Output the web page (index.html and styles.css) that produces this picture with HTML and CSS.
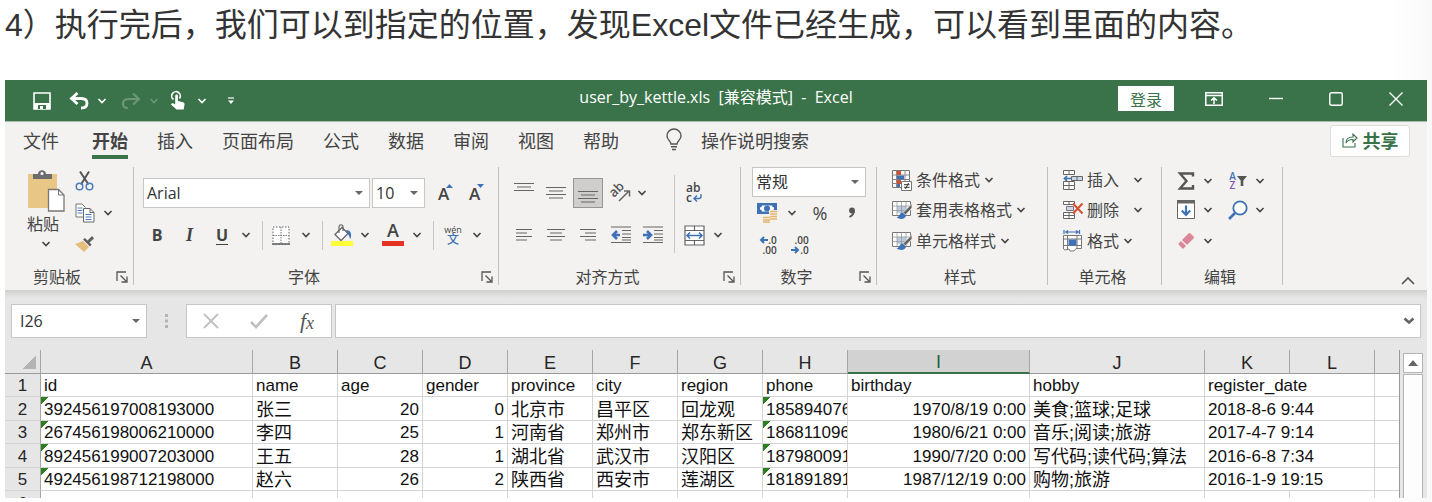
FILE: index.html
```html
<!DOCTYPE html>
<html lang="zh-CN">
<head>
<meta charset="utf-8">
<title>user_by_kettle.xls - Excel</title>
<link rel="stylesheet" href="styles.css">
</head>
<body>
<svg class="defs" aria-hidden="true">
  <symbol id="chev" viewBox="0 0 10 8"><path d="M1.500 2 5 5.500 8.500 2" fill="none" stroke="currentColor" stroke-width="1.600"/></symbol>
  <symbol id="launch" viewBox="0 0 12 12"><path d="M1 10V1h9M4.500 4.500 10 10M11 5.500V11H5.500" fill="none" stroke="#555" stroke-width="1.300"/></symbol>
  <symbol id="tablebrush" viewBox="0 0 20 20"><path d="M.5 1.500h18v14H.5z" fill="#fff" stroke="#777"/><path d="M5 6h9v7H5z" fill="#b9cbe4"/><path d="M.5 6h18M.5 10.500h18M5 1.500v14M9.500 1.500v14M14 1.500v14" stroke="#999" stroke-width=".8"/><path d="M20 3.500 11 12.500l2.500 2.500 6.500-7z" fill="#666" stroke="#f3f2f1" stroke-width=".8"/><path d="M10.500 12.500c-3 0-2.500 4-6 5 4 2.500 9 1.500 9.500-2z" fill="#3f72b5"/></symbol>
</svg>

<p class="lead">4）执行完后，我们可以到指定的位置，发现Excel文件已经生成，可以看到里面的内容。</p>

<main class="window">
  <header class="titlebar">
    <div class="quick">
      <button aria-label="保存"><svg width="18" height="18" viewBox="0 0 18 18"><path d="M1 1h16v16H1z" fill="none" stroke="#fff" stroke-width="1.600"/><path d="M1 11h16v6H1z" fill="#fff"/><path d="M5 13h8v4H5z" fill="#3a734a"/><path d="M7 14h3v3H7z" fill="#fff"/></svg></button>
      <button class="undo" aria-label="撤消"><svg width="20" height="18" viewBox="0 0 20 18"><path d="M8.500 1 2.500 6.500l6 5.500M3 6.500h9c4 0 6 2 6 4.700s-2 4.800-6 4.800" fill="none" stroke="#fff" stroke-width="2.800"/></svg></button>
      <button class="arrow" aria-label="撤消列表"><svg class="chev"><use href="#chev"/></svg></button>
      <button class="dim redo" aria-label="恢复"><svg width="20" height="18" viewBox="0 0 20 18"><path d="m12 1.500 6 5.500-6 5.500M17 7H8c-4 0-6 2-6 4.700S4 16 7 16" fill="none" stroke="currentColor" stroke-width="2.200"/></svg></button>
      <button class="dim arrow" aria-label="恢复列表"><svg class="chev"><use href="#chev"/></svg></button>
      <button class="touch" aria-label="触摸模式"><svg width="16" height="20" viewBox="0 0 16 20"><path d="M3.500 8.500a4.300 4.300 0 1 1 6-1" fill="none" stroke="#fff" stroke-width="1.700"/><path d="M5.200 5c0-2 2.800-2 2.800 0v5l5 1.200c1.300.3 1.700 1.300 1.500 2.300l-.8 5H6.500L1 13.500c.5-1.500 2-1.600 4.200 0z" fill="#fff"/></svg></button>
      <button class="touch" aria-label="模式列表"><svg class="chev"><use href="#chev"/></svg></button>
      <button class="more" aria-label="自定义"><svg width="8" height="8" viewBox="0 0 8 8"><path d="M1 1h6" stroke="#fff" stroke-width="1.200"/><path d="M1 3.500h6L4 7z" fill="#fff"/></svg></button>
    </div>
    <h1 class="doc">user_by_kettle.xls&nbsp; [兼容模式]&nbsp; -&nbsp; Excel</h1>
    <div class="sys">
      <button class="login">登录</button>
      <button aria-label="功能区显示选项"><svg width="18" height="14" viewBox="0 0 18 14"><path d="M.8.800h16.400v12.400H.8zM.8 3.500h16.400M9 12V6M6 8.500 9 5.700l3 2.800" fill="none" stroke="#fff" stroke-width="1.500"/></svg></button>
      <button aria-label="最小化"><svg width="14" height="14" viewBox="0 0 14 14"><path d="M0 6.500h14" stroke="#fff" stroke-width="1.400"/></svg></button>
      <button aria-label="最大化"><svg width="14" height="14" viewBox="0 0 14 14"><rect x=".8" y=".8" width="12.400" height="12.400" rx="1.500" fill="none" stroke="#fff" stroke-width="1.400"/></svg></button>
      <button aria-label="关闭"><svg width="14" height="14" viewBox="0 0 14 14"><path d="m.5.500 13 13M13.500.500l-13 13" stroke="#fff" stroke-width="1.400"/></svg></button>
    </div>
  </header>

  <nav class="tabs">
    <button>文件</button>
    <button class="active">开始</button>
    <button>插入</button>
    <button>页面布局</button>
    <button>公式</button>
    <button>数据</button>
    <button>审阅</button>
    <button>视图</button>
    <button>帮助</button>
    <button class="tell"><svg width="16" height="22" viewBox="0 0 16 22"><path d="M5 15c0-3-4-4-4-8a7 7 0 0 1 14 0c0 4-4 5-4 8zM5 17.800h6M6 20.500h4" fill="none" stroke="#555" stroke-width="1.400"/></svg>操作说明搜索</button>
    <button class="share"><svg width="16" height="16" viewBox="0 0 16 16"><path d="M1 6v9h12v-4M4 11c0-4 3-6 7-6V2l4 4-4 4V7.500C8 7.500 5.500 8 4 11z" fill="none" stroke="#3a734a" stroke-width="1.100"/></svg>共享</button>
  </nav>

  <section class="ribbon">
    <div class="group clip">
      <div class="clip-tools">
        <button class="paste"><svg width="38" height="42" viewBox="0 0 38 42"><path d="M1 4h29v34H1z" fill="#e8c786"/><path d="M6 9V4h5c0-5 8-5 8 0h6v5z" fill="#6c6c6c"/><circle cx="15" cy="3.500" r="1.500" fill="#fff"/><path d="M21.500 19.500h10l5.500 5.500v16H21.500z" fill="#fff" stroke="#777" stroke-width="1.300"/><path d="M31.500 19.500V25H37" fill="none" stroke="#777"/></svg><span>粘贴</span><svg class="chev"><use href="#chev"/></svg></button>
        <div class="clip-side">
          <button aria-label="剪切"><svg width="20" height="20" viewBox="0 0 20 20"><path d="m5 .5 8.500 13M14 .5l-8 13" stroke="#555" stroke-width="2"/><circle cx="4.500" cy="15.500" r="3.300" fill="none" stroke="#4a7dbd" stroke-width="1.500"/><circle cx="14.500" cy="15.500" r="3.300" fill="none" stroke="#4a7dbd" stroke-width="1.500"/></svg></button>
          <button class="copy" aria-label="复制"><svg width="20" height="20" viewBox="0 0 20 20"><path d="M1 1h6l3.500 3.500V14H1z" fill="#fff" stroke="#777"/><path d="M2.500 5h5M2.500 7.500h5M2.500 10h5" stroke="#4a7dbd"/><path d="M8.500 5.500H15l4 4V19H8.500z" fill="#fff" stroke="#666"/><path d="M15 5.500v4h4" fill="none" stroke="#666"/><path d="M10.500 11.500h6M10.500 14h6M10.500 16.500h6" stroke="#4a7dbd"/></svg></button>
          <svg class="chev"><use href="#chev"/></svg>
          <button aria-label="格式刷"><svg width="20" height="16" viewBox="0 0 20 16"><path d="M0 8 8 5l6 6-5 5z" fill="#e6bd7c"/><path d="m8 3.500 2-1.500 2.500 2.500L17 0l2 2.500-4.500 4 2 2L15 10.500z" fill="#5f5f5f"/></svg></button>
        </div>
      </div>
      <footer><span>剪贴板</span><svg class="launch"><use href="#launch"/></svg></footer>
    </div>

    <div class="group font">
      <div class="two">
        <div class="font-pick">
          <span class="combo family"><select aria-label="字体"><option>Arial</option></select></span>
          <span class="combo size"><select aria-label="字号"><option>10</option></select></span>
          <button class="grow" aria-label="增大字号">A<svg width="7" height="4" viewBox="0 0 7 4"><path d="M0 4h7L3.500 0z" fill="#3f72b5"/></svg></button>
          <button class="grow" aria-label="减小字号">A<svg width="7" height="4" viewBox="0 0 7 4"><path d="M0 0h7L3.500 4z" fill="#3f72b5"/></svg></button>
        </div>
        <div class="font-style">
          <button class="bold">B</button>
          <button class="italic">I</button>
          <button class="under">U</button>
          <svg class="chev"><use href="#chev"/></svg>
          <i class="bar"></i>
          <button aria-label="边框"><svg width="18" height="19" viewBox="0 0 18 19"><path d="M1 1h16v17H1z" fill="#fff" stroke="#666" stroke-dasharray="1.500 1.500"/><path d="M9 1v17M1 9.500h16" stroke="#777" stroke-dasharray="1.500 1"/><path d="M0 18h18" stroke="#555" stroke-width="1.400"/></svg></button>
          <svg class="chev"><use href="#chev"/></svg>
          <i class="bar"></i>
          <button aria-label="填充颜色"><svg width="22" height="22" viewBox="0 0 22 22"><path d="m4 10.500 7-7 6 6-7 7z" fill="#fff" stroke="#666" stroke-width="1.300"/><path d="M8 9V3c0-3 4-3 4 0v4" fill="none" stroke="#666" stroke-width="1.200"/><path d="M15 6c5 0 6 4 4.500 9-1-1-1-3-2.500-5z" fill="#3f72b5"/><path d="M0 17h22v5H0z" fill="#ffff38"/></svg></button>
          <svg class="chev"><use href="#chev"/></svg>
          <button class="color">A</button>
          <svg class="chev"><use href="#chev"/></svg>
          <i class="bar"></i>
          <button class="wen"><span>wén</span><b>文</b></button>
          <svg class="chev"><use href="#chev"/></svg>
        </div>
      </div>
      <footer><span>字体</span><svg class="launch"><use href="#launch"/></svg></footer>
    </div>

    <div class="group align">
      <div class="align-tools">
        <button class="up" aria-label="顶端对齐"><svg width="20" height="12" viewBox="0 0 20 12"><path d="M0 1.500h20M3 5h14M0 8.500h20" stroke="#666" stroke-width="1.200"/></svg></button>
        <button class="mid" aria-label="垂直居中"><svg width="20" height="14" viewBox="0 0 20 14"><path d="M0 1.500h20M3 5h14M0 8.500h20M3 12h14" stroke="#666" stroke-width="1.200"/></svg></button>
        <button class="on" aria-label="底端对齐"><svg width="20" height="14" viewBox="0 0 20 14"><path d="M0 1.500h20M3 5h14M0 8.500h20M3 12h14" stroke="#666" stroke-width="1.200"/></svg></button>
        <button aria-label="方向"><svg width="22" height="20" viewBox="0 0 22 20"><text x="4" y="15" transform="rotate(-45 4 15)" font-family="Open Sans" font-weight="600" font-size="13" fill="#555">ab</text><path d="m9 18 10-10M14 8h5.500v5.500" fill="none" stroke="#666" stroke-width="1.500"/></svg></button>
        <svg class="chev near"><use href="#chev"/></svg>
        <i class="bar tall"></i>
        <button class="wrap"><span>ab</span><span>c<svg width="9" height="8" viewBox="0 0 9 8"><path d="M8 0v2.500C8 4 7 4.500 6 4.500H1.500m2.500-3-3 3 3 3" fill="none" stroke="#3f72b5" stroke-width="1.400"/></svg></span></button>
        <span></span>
        <button aria-label="左对齐"><svg width="18" height="14" viewBox="0 0 18 14"><path d="M1 1.500h16M1 5h11M1 8.500h16M1 12h11" stroke="#666" stroke-width="1.200"/></svg></button>
        <button aria-label="居中"><svg width="18" height="14" viewBox="0 0 18 14"><path d="M0 1.500h18M3 5h12M0 8.500h18M3 12h12" stroke="#666" stroke-width="1.200"/></svg></button>
        <button aria-label="右对齐"><svg width="18" height="14" viewBox="0 0 18 14"><path d="M1 1.500h16M6 5h11M1 8.500h16M6 12h11" stroke="#666" stroke-width="1.200"/></svg></button>
        <button aria-label="减少缩进"><svg width="20" height="18" viewBox="0 0 20 18"><path d="M0 1h20M11 4.500h9M11 8h9M11 11.500h9M0 16.500h20M11 14h9" stroke="#666" stroke-width="1.200"/><path d="M9 9H2m4-4L2 9l4 4" fill="none" stroke="#3f72b5" stroke-width="2.600"/></svg></button>
        <button aria-label="增加缩进"><svg width="20" height="18" viewBox="0 0 20 18"><path d="M0 1h20M11 4.500h9M11 8h9M11 11.500h9M0 16.500h20M11 14h9" stroke="#666" stroke-width="1.200"/><path d="M0 9h7M4 5l4 4-4 4" fill="none" stroke="#3f72b5" stroke-width="2.600"/></svg></button>
        <button aria-label="合并后居中"><svg width="21" height="21" viewBox="0 0 21 21"><path d="M1 1h19v19H1z" fill="#fff" stroke="#666" stroke-width="1.200"/><path d="M1 5.500h19M1 15.500h19M10.500 1v4.500M10.500 15.500V20" stroke="#666" stroke-width="1.200"/><path d="M3 10.500h15M6 7.500l-3 3 3 3M15 7.500l3 3-3 3" fill="none" stroke="#3f72b5" stroke-width="1.600"/></svg></button>
        <svg class="chev"><use href="#chev"/></svg>
      </div>
      <footer><span>对齐方式</span><svg class="launch"><use href="#launch"/></svg></footer>
    </div>

    <div class="group number">
      <div class="number-tools">
        <span class="combo format"><select aria-label="数字格式"><option>常规</option></select></span>
        <div class="number-row">
          <button aria-label="会计数字格式"><svg width="22" height="20" viewBox="0 0 22 20"><path d="M0 0h20v11H0z" fill="#3f72b5"/><path d="M5 2.500h10q0 2 2 2v2q-2 0-2 2H5q0-2-2-2v-2q2 0 2-2z" fill="#fff"/><circle cx="10" cy="5.500" r="3" fill="#3f72b5"/><path d="M12 7h9v12H6v-7h6z" fill="#f3f2f1"/><path d="M13 8.500h7M13 11h7M13 13.500h7M13 16h7M6 14.500h7M6 17h7M6 19h7" stroke="#e3b76b" stroke-width="1.600"/></svg></button>
          <svg class="chev"><use href="#chev"/></svg>
          <button class="pct">%</button>
          <button aria-label="千位分隔样式"><svg width="8" height="12" viewBox="0 0 8 12"><circle cx="4" cy="3.500" r="2.900" fill="#555"/><path d="M6 3.500C6 7 4.500 8.500 1.500 10" fill="none" stroke="#555" stroke-width="1.800"/></svg></button>
        </div>
        <div class="decimals">
          <button><span><svg width="9" height="8" viewBox="0 0 9 8"><path d="M9 4H2m3-3L2 4l3 3" fill="none" stroke="#3f72b5" stroke-width="2"/></svg>.0</span><span>.00</span></button>
          <button><span>.00</span><span><svg width="9" height="8" viewBox="0 0 9 8"><path d="M0 4h7M4 1l3 3-3 3" fill="none" stroke="#3f72b5" stroke-width="2"/></svg>.0</span></button>
        </div>
      </div>
      <footer><span>数字</span><svg class="launch"><use href="#launch"/></svg></footer>
    </div>

    <div class="group styles">
      <div class="list">
        <button><svg width="20" height="21" viewBox="0 0 20 21"><path d="M.5.500h17v17H.5z" fill="#fff" stroke="#777"/><path d="M4.500.500v17M13 .5v17M.5 5h17M.5 9.500h17M.5 13.500h17" stroke="#888"/><path d="M5 1h4v4H5zM5 10h4v4H5z" fill="#d4502e"/><path d="M5 5.500h7v4H5zM5 14h3v3H5z" fill="#3f72b5"/><path d="M9.500 11.500h10v9h-10z" fill="#fff" stroke="#777"/><path d="M12 14.700h5.500M12 17.300h5.500M16.500 13l-3 6" stroke="#333"/></svg>条件格式<svg class="chev"><use href="#chev"/></svg></button>
        <button><svg width="20" height="20"><use href="#tablebrush"/></svg>套用表格格式<svg class="chev"><use href="#chev"/></svg></button>
        <button><svg width="20" height="20"><use href="#tablebrush"/></svg>单元格样式<svg class="chev"><use href="#chev"/></svg></button>
      </div>
      <footer><span>样式</span></footer>
    </div>

    <div class="group cells">
      <div class="list">
        <button class="spread"><svg width="20" height="20" viewBox="0 0 20 20"><path d="M.5.500h11v4H.5zM6 .5v4M.5 11.500h11v8H.5zM6 11.500v8M.5 15.500h11" fill="#fff" stroke="#666"/><path d="M8.500 6.500h11v4h-11zM14 6.500v4" fill="#c9d6ea" stroke="#666"/><path d="M8 8.500H1.500M4 6 1.500 8.500 4 11" fill="none" stroke="#3f72b5" stroke-width="1.700"/></svg>插入<svg class="chev"><use href="#chev"/></svg></button>
        <button class="spread"><svg width="20" height="20" viewBox="0 0 20 20"><path d="M.5 1.500h11v3H.5zM6 1.500v3M.5 12.500h11v6H.5zM6 12.500v6M.5 15.500h11" fill="#fff" stroke="#666"/><path d="M3.500 6.500h7v4h-7z" fill="#c9d6ea" stroke="#777"/><path d="m10 3.500 9.500 10M19.500 3.500l-9.500 10" stroke="#d4502e" stroke-width="2"/></svg>删除<svg class="chev"><use href="#chev"/></svg></button>
        <button><svg width="20" height="22" viewBox="0 0 20 22"><path d="M2 2h14M1 0v4M16.500 0v4M5 .5 3 2l2 1.500M13 .5 15 2l-2 1.500" fill="none" stroke="#3f72b5" stroke-width="1.200"/><path d="M.5 5.500h18v13H13l-2 2.500H7l-1-2-4 1-1.500-1z" fill="#fff" stroke="#777"/><path d="M4.500 5.500v14M14 5.500v13M.5 9h18M.5 15.500h18" stroke="#777"/><path d="M5.500 9.500h8v6h-8z" fill="#3f72b5"/></svg>格式<svg class="chev"><use href="#chev"/></svg></button>
      </div>
      <footer><span>单元格</span></footer>
    </div>

    <div class="group edit">
      <div class="edit-tools">
        <button aria-label="自动求和"><svg width="18" height="18" viewBox="0 0 18 18"><path d="M16 4.500V1.500H3L9.500 9 3 16.500h13V13" fill="none" stroke="#555" stroke-width="2.400"/></svg></button>
        <svg class="chev"><use href="#chev"/></svg>
        <button class="sort"><span><b>A</b><b>Z</b></span><svg width="10" height="10" viewBox="0 0 10 10"><path d="M0 0h10L6.300 4.500V10H3.700V4.500z" fill="#555"/></svg></button>
        <svg class="chev"><use href="#chev"/></svg>
        <button aria-label="填充"><svg width="18" height="19" viewBox="0 0 18 19"><path d="M.5.500h17v18H.5z" fill="#fff" stroke="#666"/><path d="M0 0h18v3.500H0z" fill="#666"/><path d="M9 5.500v9M4.800 10.500 9 15l4.200-4.500" fill="none" stroke="#3f72b5" stroke-width="2.200"/></svg></button>
        <svg class="chev"><use href="#chev"/></svg>
        <button aria-label="查找和选择"><svg width="20" height="20" viewBox="0 0 20 20"><circle cx="12" cy="8" r="6.700" fill="#fff" stroke="#3f72b5" stroke-width="1.800"/><path d="m7 13-6 6" stroke="#3f72b5" stroke-width="2.600"/></svg></button>
        <svg class="chev"><use href="#chev"/></svg>
        <button aria-label="清除"><svg width="18" height="18" viewBox="0 0 18 18"><path d="M11.500 1.500q1-1 2 0l3 3q1 1 0 2L10 13 5 8z" fill="#dc8799"/><path d="m4 9 5 5-2 2q-1 1-2 0l-3-3q-1-1 0-2z" fill="#dc8799"/></svg></button>
        <svg class="chev"><use href="#chev"/></svg>
      </div>
      <footer><span>编辑</span></footer>
    </div>

    <button class="collapse" aria-label="折叠功能区"><svg width="14" height="8" viewBox="0 0 14 8"><path d="m1 7 6-6 6 6" fill="none" stroke="#555" stroke-width="1.600"/></svg></button>
  </section>

  <section class="formula">
    <span class="name combo"><input aria-label="名称框" value="I26"></span>
    <svg class="dots" width="4" height="14" viewBox="0 0 4 14"><path d="M0 0h3v3H0zM0 5.500h3v3H0zM0 11h3v3H0z" fill="#b4b4b4"/></svg>
    <div class="fx">
      <button aria-label="取消"><svg width="16" height="14" viewBox="0 0 16 14"><path d="m1 0 14 14M15 0 1 14" stroke="#c0c0c0" stroke-width="1.800"/></svg></button>
      <button aria-label="输入"><svg width="18" height="14" viewBox="0 0 18 14"><path d="m1 8 5 5L17 1" fill="none" stroke="#c0c0c0" stroke-width="2.600"/></svg></button>
      <button class="fn" aria-label="插入函数">f<span>x</span></button>
    </div>
    <div class="entry"><input aria-label="编辑栏"><svg width="12" height="8" viewBox="0 0 12 8"><path d="m1.500 1.500 4.500 4 4.500-4" fill="none" stroke="#666" stroke-width="2.600"/></svg></div>
  </section>

  <section class="sheet">
    <table>
      <colgroup><col class="c-row"><col class="c-id"><col span="7" class="c-std"><col class="c-birth"><col class="c-hobby"><col span="2" class="c-std"><col></colgroup>
      <thead><tr><th class="corner"></th><th>A</th><th>B</th><th>C</th><th>D</th><th>E</th><th>F</th><th>G</th><th>H</th><th class="sel">I</th><th>J</th><th>K</th><th>L</th><th></th></tr></thead>
      <tbody>
        <tr><th>1</th><td>id</td><td>name</td><td>age</td><td>gender</td><td>province</td><td>city</td><td>region</td><td>phone</td><td>birthday</td><td>hobby</td><td colspan="2">register_date</td><td></td></tr>
        <tr><th>2</th><td class="txt">392456197008193000</td><td class="zh">张三</td><td class="num">20</td><td class="num">0</td><td class="zh">北京市</td><td class="zh">昌平区</td><td class="zh">回龙观</td><td class="txt">185894076</td><td class="num">1970/8/19 0:00</td><td class="zh">美食;篮球;足球</td><td colspan="2">2018-8-6 9:44</td><td></td></tr>
        <tr><th>3</th><td class="txt">267456198006210000</td><td class="zh">李四</td><td class="num">25</td><td class="num">1</td><td class="zh">河南省</td><td class="zh">郑州市</td><td class="zh">郑东新区</td><td class="txt">186811096</td><td class="num">1980/6/21 0:00</td><td class="zh">音乐;阅读;旅游</td><td colspan="2">2017-4-7 9:14</td><td></td></tr>
        <tr><th>4</th><td class="txt">892456199007203000</td><td class="zh">王五</td><td class="num">28</td><td class="num">1</td><td class="zh">湖北省</td><td class="zh">武汉市</td><td class="zh">汉阳区</td><td class="txt">187980091</td><td class="num">1990/7/20 0:00</td><td class="zh">写代码;读代码;算法</td><td colspan="2">2016-6-8 7:34</td><td></td></tr>
        <tr><th>5</th><td class="txt">492456198712198000</td><td class="zh">赵六</td><td class="num">26</td><td class="num">2</td><td class="zh">陕西省</td><td class="zh">西安市</td><td class="zh">莲湖区</td><td class="txt">181891891</td><td class="num">1987/12/19 0:00</td><td class="zh">购物;旅游</td><td colspan="2">2016-1-9 19:15</td><td></td></tr>
        <tr><th>6</th><td></td><td></td><td></td><td></td><td></td><td></td><td></td><td></td><td></td><td></td><td></td><td></td><td></td></tr>
      </tbody>
    </table>
    <div class="scroll">
      <button aria-label="向上滚动"><svg width="10" height="6" viewBox="0 0 10 6"><path d="M0 6h10L5 0z" fill="#666"/></svg></button>
      <div class="track"></div>
    </div>
  </section>
</main>
</body>
</html>
```

FILE: styles.css
```css
* { box-sizing: border-box; }

body {
  margin: 0;
  padding: 0 5px;
  height: 100vh;
  overflow: hidden;
  display: flex;
  flex-direction: column;
  font-family: "Open Sans", "Noto Sans CJK SC", sans-serif;
  font-size: 16px;
  color: #444;
  background: linear-gradient(to left, #f8f8f8, #fff 40px);
}

button, input, select {
  font: inherit;
  color: inherit;
  margin: 0;
  padding: 0;
  border: 0;
  background: none;
  outline: 0;
}

button {
  display: flex;
  align-items: center;
  justify-content: center;
  white-space: nowrap;
}

svg { flex: none; display: block; overflow: visible; }
.defs { position: absolute; width: 0; height: 0; }
.chev { width: 10px; height: 8px; }
.launch { width: 12px; height: 12px; }

.lead {
  margin: 0;
  height: 80px;
  line-height: 50px;
  font-family: "Liberation Sans", "Noto Sans CJK SC", sans-serif;
  font-size: 32px;
  color: #333;
  white-space: nowrap;
}

.window {
  flex: 1;
  min-height: 0;
  margin-bottom: 4px;
  display: flex;
  flex-direction: column;
  overflow: hidden;
  background: #e6e6e6;
}

/* title bar */
.titlebar {
  flex: none;
  height: 42px;
  display: grid;
  grid-template-columns: 1fr auto 1fr;
  align-items: center;
  color: #fff;
  background: #3a734a;
  border-bottom: 1px solid #a3bfaa;
}
.quick { display: flex; align-items: center; padding-left: 28px; }
.quick .undo { margin-left: 18px; }
.quick .arrow { margin-left: 8px; }
.quick .redo { margin-left: 14px; }
.quick .touch { margin-left: 11px; }
.quick .more { margin-left: 20px; }
.quick .dim { color: #6a9776; }
.doc {
  margin: 0;
  padding-bottom: 8px;
  font-size: 16px;
  font-weight: 400;
  line-height: 24px;
  white-space: pre;
}
.sys {
  display: flex;
  justify-content: flex-end;
  align-items: center;
  gap: 46px;
  padding: 0 24px 4px 0;
}
.login {
  width: 56px;
  height: 25px;
  margin-right: -15px;
  color: #3a734a;
  background: #fff;
}

/* tabs */
.tabs {
  flex: none;
  height: 38px;
  display: flex;
  align-items: center;
  gap: 29px;
  padding: 0 17px 0 18px;
  font-size: 18px;
  background: #f3f2f1;
}
.tabs button { height: 38px; padding-bottom: 2px; }
.tabs .active {
  margin-left: 4px;
  font-weight: 700;
  background: linear-gradient(#3a734a, #3a734a) 0 33px / 100% 4px no-repeat;
}
.tabs .tell { gap: 19px; margin-left: 18px; }
.tabs .share {
  width: 80px;
  height: 32px;
  margin-left: auto;
  gap: 5px;
  font-weight: 700;
  color: #3a734a;
  background: #fff;
  border: 1px solid #dedddc;
  border-radius: 3px;
}

/* ribbon */
.ribbon {
  flex: none;
  height: 130px;
  display: flex;
  padding: 7px 0 5px;
  background: #f3f2f1;
}
.group {
  flex: none;
  display: flex;
  flex-direction: column;
  justify-content: space-between;
  border-right: 1px solid #c0bfbe;
}
.group footer {
  display: grid;
  grid-template-columns: 1fr 24px;
  align-items: center;
  height: 16px;
  line-height: 16px;
  text-align: center;
}
.group footer .launch { justify-self: end; margin-right: 5px; }
.styles footer, .cells footer, .edit footer { grid-template-columns: 1fr 4px; }
.clip { width: 129px; }
.font { width: 365px; }
.align { width: 242px; }
.number { width: 136px; }
.styles { width: 171px; }
.cells { width: 114px; }
.edit { width: 121px; }

.clip-tools { display: flex; align-items: flex-start; padding: 3px 0 0 22px; gap: 10px; }
.paste { flex-direction: column; }
.paste span { line-height: 24px; margin-right: 6px; }
.paste .chev { margin: 4px 0 0; }
.clip-side {
  display: grid;
  grid-template-columns: 20px 26px;
  grid-template-rows: 22px 42px 20px;
  align-items: center;
  justify-items: center;
}
.clip-side button { grid-column: 1; }

.two { display: grid; grid-template-rows: 30px 30px; row-gap: 12px; padding: 11px 0 0 9px; }
.font-pick { display: flex; gap: 2px; }
.combo {
  position: relative;
  display: block;
  height: 30px;
  background: #fff;
  border: 1px solid #c8c6c4;
}
.combo::after {
  content: "";
  position: absolute;
  right: 6px;
  top: 12px;
  border: 4px solid transparent;
  border-top-color: #666;
  border-bottom: 0;
}
.combo select, .combo input {
  appearance: none;
  width: 100%;
  height: 100%;
  padding-left: 3px;
  color: #333;
}
.family { width: 227px; }
.size { width: 53px; }
.grow { width: 29px; font-size: 17px; font-weight: 600; }
.grow:first-of-type { margin-left: 4px; }
.grow svg { align-self: flex-start; margin: 6px 0 0 -3px; }
.font-style {
  display: grid;
  grid-template-columns: 28px 37px 28px 20px 12px 26px 24px 8px 31px 16px 40px 8px 24px 16px 32px;
  align-items: center;
  justify-items: center;
}
.font-style > .chev { margin: 0 -1px; }
.bar { width: 1px; height: 29px; background: #c8c6c4; }
.bold, .under { font-weight: 700; line-height: 20px; }
.italic { font: italic 700 18px/20px "Liberation Serif", serif; }
.under { border-bottom: 1px solid #444; line-height: 18px; }
.color { width: 22px; height: 22px; font-size: 18px; font-weight: 600; line-height: 17px; padding-bottom: 4px; border-bottom: 5px solid #e63222; }
.wen { flex-direction: column; font-size: 9px; line-height: 9px; }
.wen b { font-size: 12px; line-height: 12px; font-weight: 500; color: #3f72b5; }

.align-tools {
  display: grid;
  grid-template-columns: 32px 32px 32px 33px 32px 10px 30px 18px;
  grid-template-rows: 30px 30px;
  row-gap: 12px;
  padding: 11px 0 0 9px;
  align-items: center;
  justify-items: center;
}
.align-tools .up { align-self: start; padding-top: 4px; }
.align-tools .on { width: 30px; height: 30px; padding-top: 8px; background: #cfcecd; border: 1px solid #979593; }
.align-tools .near { justify-self: start; }
.align-tools .tall { grid-row: 1 / 3; grid-column: 6; height: 78px; }
.align-tools .wrap { grid-column: 7; flex-direction: column; align-items: flex-start; font-size: 12px; font-weight: 600; line-height: 10px; }
.wrap span { display: flex; align-items: center; gap: 1px; }

.number-tools { padding-left: 11px; }
.number .format { width: 114px; }
.number-row {
  display: grid;
  grid-template-columns: 32px 16px 40px 24px;
  height: 32px;
  align-items: center;
  justify-items: center;
}
.pct { font-size: 18px; }
.decimals { display: grid; grid-template-columns: 32px 32px; height: 32px; align-items: center; justify-items: center; }
.decimals button { flex-direction: column; align-items: flex-end; font-size: 10px; font-weight: 600; line-height: 10px; }
.decimals span { display: flex; align-items: center; }

.list { display: grid; grid-template-rows: 28px 31px 31px; padding-left: 15px; justify-items: start; line-height: 20px; }
.list button { gap: 4px; padding-bottom: 2px; }
.list .spread .chev { margin-left: 10px; }
.edit-tools {
  display: grid;
  grid-template-columns: 18px 26px 34px 10px;
  grid-template-rows: 27px 31px 31px;
  padding-left: 15px;
  align-items: center;
  justify-items: center;
}
.sort { gap: 1px; font-size: 10px; line-height: 9px; }
.sort b { display: block; font-weight: 600; color: #3f72b5; }
.sort b + b { color: #8a4fae; }
.collapse { margin: auto 12px 0 auto; }

/* formula bar */
.formula {
  flex: none;
  height: 60px;
  display: flex;
  align-items: center;
  padding: 2px 6px 0;
  background: linear-gradient(#d0d0ce, #e6e6e6 8px);
}
.formula .combo { width: 136px; height: 34px; }
.formula .combo::after { top: 14px; }
.formula .combo input { padding-left: 8px; }
.formula .dots { margin: 0 17px 0 18px; }
.fx {
  width: 146px;
  height: 34px;
  margin-right: 3px;
  display: grid;
  grid-template-columns: 1fr 1fr 1fr;
  align-items: center;
  background: #fff;
  border: 1px solid #c8c6c4;
}
.fn { font: italic 22px/24px "Liberation Serif", serif; color: #555; }
.fn span { font-size: 18px; padding-top: 4px; }
.entry {
  flex: 1;
  height: 34px;
  display: flex;
  align-items: center;
  padding-right: 5px;
  background: #fff;
  border: 1px solid #c8c6c4;
}
.entry input { flex: 1; height: 100%; }

/* sheet */
.sheet { flex: 1; min-height: 0; display: flex; align-items: flex-start; overflow: hidden; }
table {
  flex: 1;
  width: 0;
  table-layout: fixed;
  border-collapse: separate;
  border-spacing: 0;
  font-family: "Liberation Sans", "Noto Sans CJK SC", sans-serif;
  font-size: 17px;
  color: #111;
  border-right: 1px solid #9a9a9a;
}
.c-row { width: 36px; }
.c-id { width: 212px; }
.c-std { width: 85px; }
.c-birth { width: 182px; }
.c-hobby { width: 175px; }
th, td {
  height: 23px;
  padding: 2px 3px 0;
  line-height: 20px;
  font-weight: 400;
  white-space: nowrap;
  overflow: hidden;
  border-right: 1px solid #d4d4d4;
  border-bottom: 1px solid #d4d4d4;
}
tbody tr:nth-child(even) > * { height: 24px; }
td { background: #fff; }
th { color: #262626; background: #e6e6e6; border-right-color: #a6a6a6; }
thead th { height: 24px; font-size: 18px; border-bottom-color: #9a9a9a; }
th:last-child, td:last-child { border-right: 0; }
thead .corner { background: linear-gradient(135deg, transparent 50%, #b4b4b4 50%) 17px 5px / 14px 14px no-repeat #e6e6e6; }
thead .sel { color: #21603a; background: #d2d2d2; border-bottom: 2px solid #3a734a; }
.num { text-align: right; }
.zh { font-size: 18px; }
.txt { background: linear-gradient(135deg, #2f7d22 50%, transparent 50%) 0 0 / 8px 8px no-repeat #fff; }

.scroll { flex: none; align-self: stretch; width: 27px; padding: 3px 4px 0 3px; display: flex; flex-direction: column; }
.scroll button { height: 20px; background: #fff; border: 1px solid #b4b4b4; }
.track { flex: 1; margin-top: 1px; background: #fdfdfd; border: 1px solid #b4b4b4; border-bottom: 0; }
```
